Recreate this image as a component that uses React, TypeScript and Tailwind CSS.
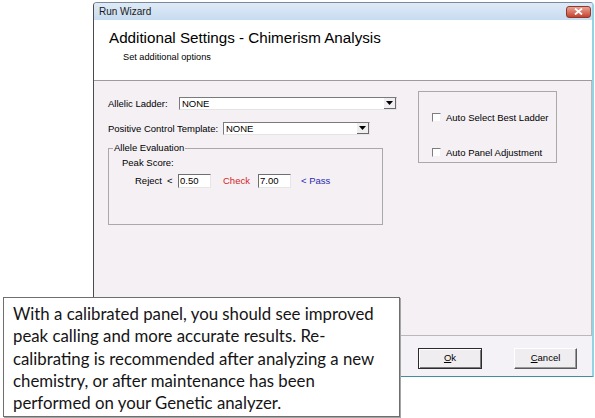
import React from 'react'

// Run Wizard dialog (Win7 frame) with a callout box laid over its lower left corner

const Arrow = () => (
  <svg width="7" height="4" viewBox="0 0 7 4">
    <path d="M0 0h7L3.5 4z" fill="#000" />
  </svg>
)

const Select: React.FC<{ w: string }> = ({ w }) => (
  <div className={`flex h-[13px] ${w} bg-white border border-t-[#7a7a7a] border-l-[#7a7a7a] border-b-[#e4e4e4] border-r-[#e4e4e4]`}>
    <span className="flex-1 pl-[2px] text-[9.5px] leading-[11px]">NONE</span>
    <div className="flex w-[12px] items-center justify-center bg-[#f0eef0] border-b border-r border-[#6a6a6a]">
      <Arrow />
    </div>
  </div>
)

const Field: React.FC<{ value: string }> = ({ value }) => (
  <div className="h-[14px] w-[33px] bg-white border border-t-[#6f6f6f] border-l-[#6f6f6f] border-b-[#e6e6e6] border-r-[#e6e6e6] pl-[1px] text-[9.5px] leading-[12px]">
    {value}
  </div>
)

const Check: React.FC<{ label: string }> = ({ label }) => (
  <div className="flex h-[9px] items-center">
    <div className="h-[9px] w-[9px] bg-white border border-t-[#7d7d7d] border-l-[#7d7d7d] border-b-[#f2f2f2] border-r-[#f2f2f2]" />
    <span className="ml-[5px] text-[9.5px] leading-[11px] whitespace-nowrap">{label}</span>
  </div>
)

export default function App() {
  return (
    <div className="relative h-[418px] w-[595px] overflow-hidden bg-white text-black font-['Liberation_Sans',Arial,sans-serif]">
      <div className="ml-[93px] mt-[2px] flex h-[375px] w-[501px] flex-col overflow-hidden rounded-t-[4px] border-l border-t border-[#7a8a99] border-l-[#4b4b4b] border-r-2 border-r-[#93d3e3] border-b border-b-[#3f8f9c]">
        {/* title bar */}
        <div className="flex h-[17px] items-center justify-between bg-gradient-to-b from-[#dfeaf6] to-[#c7dcf0] pl-[5px] pr-[1px]">
          <span className="text-[10px] leading-[12px] text-[#1a1a1a]">Run Wizard</span>
          <div className="flex h-[12px] w-[25px] items-center justify-center rounded-[3px] border border-[#8b3a2e] bg-gradient-to-b from-[#e9a394] to-[#c4412d]">
            <svg width="9" height="7" viewBox="0 0 9 7">
              <path d="M1 0.5l7 6M8 0.5l-7 6" stroke="#fff" strokeWidth="1.8" />
            </svg>
          </div>
        </div>

        {/* header */}
        <div className="h-[61px] border-b border-[#9c9c9c] bg-white pl-[15px] pt-[9px]">
          <div className="text-[15.2px] leading-[17px]">Additional Settings - Chimerism Analysis</div>
          <div className="ml-[14px] mt-[5px] text-[9.2px] leading-[12px]">Set additional options</div>
        </div>

        {/* settings panel */}
        <div className="flex h-[255px] items-start border-b border-r border-[#b9b9b9] bg-[#f4f0f4] pl-[14px] pt-[10px]">
          <div className="w-[289px] pt-[6px]">
            <div className="flex h-[13px] items-center">
              <span className="w-[71px] text-[9.5px] leading-[11px]">Allelic Ladder:</span>
              <Select w="w-[218px]" />
            </div>
            <div className="mt-[12px] flex h-[13px] items-center">
              <span className="w-[115px] text-[9.5px] leading-[11px] whitespace-nowrap">Positive Control Template:</span>
              <Select w="w-[147px]" />
            </div>
            <div className="relative mt-[13px] h-[77px] w-[275px] border border-[#a9a9a9] pl-[13px] pt-[8px]">
              <span className="absolute -top-[7px] left-[4px] bg-[#f4f0f4] px-[1px] text-[9.5px] leading-[12px]">Allele Evaluation</span>
              <div className="text-[9.5px] leading-[12px]">Peak Score:</div>
              <div className="mt-[5px] flex h-[14px] items-center text-[9.5px]">
                <span className="ml-[13px] w-[32px]">Reject</span>
                <span className="w-[11px]">&lt;</span>
                <Field value="0.50" />
                <span className="ml-[12px] w-[35px] text-[#d42424]">Check</span>
                <Field value="7.00" />
                <span className="ml-[10px] text-[#2a2ab0]">&lt; Pass</span>
              </div>
            </div>
          </div>
          <div className="ml-[21px] flex h-[72px] w-[139px] flex-col gap-[26px] border border-[#a9a9a9] pl-[13px] pt-[21px]">
            <Check label="Auto Select Best Ladder" />
            <Check label="Auto Panel Adjustment" />
          </div>
        </div>

        {/* buttons */}
        <div className="flex flex-1 justify-end gap-[32px] bg-[#f4f2f6] pr-[15px] pt-[12px]">
          <div className="flex h-[21px] w-[64px] items-center justify-center border border-[#2b2b2b] bg-[#efedf0] shadow-[inset_1px_1px_0_#ffffff,inset_-1px_-1px_0_#7a7a7a] text-[9.5px]">
            <span><span className="underline">O</span>k</span>
          </div>
          <div className="flex h-[21px] w-[63px] items-center justify-center border border-t-white border-l-white border-b-[#5a5a5a] border-r-[#5a5a5a] bg-[#efedf0] shadow-[inset_-1px_-1px_0_#9a9a9a] text-[9.5px]">
            <span><span className="underline">C</span>ancel</span>
          </div>
        </div>
      </div>

      {/* callout */}
      <div className="absolute left-[3px] top-[297px] h-[120px] w-[397px] border border-[#6e6e6e] bg-white pl-[9px] pt-[5px] shadow-[1px_1px_0_0_#a5a5a5] font-['Lato',sans-serif] text-[16.8px] leading-[22.3px] text-[#141414]">
        With a calibrated panel, you should see improved
        <br />
        peak calling and more accurate results. Re-
        <br />
        calibrating is recommended after analyzing a new
        <br />
        chemistry, or after maintenance has been
        <br />
        performed on your Genetic analyzer.
      </div>
    </div>
  )
}
